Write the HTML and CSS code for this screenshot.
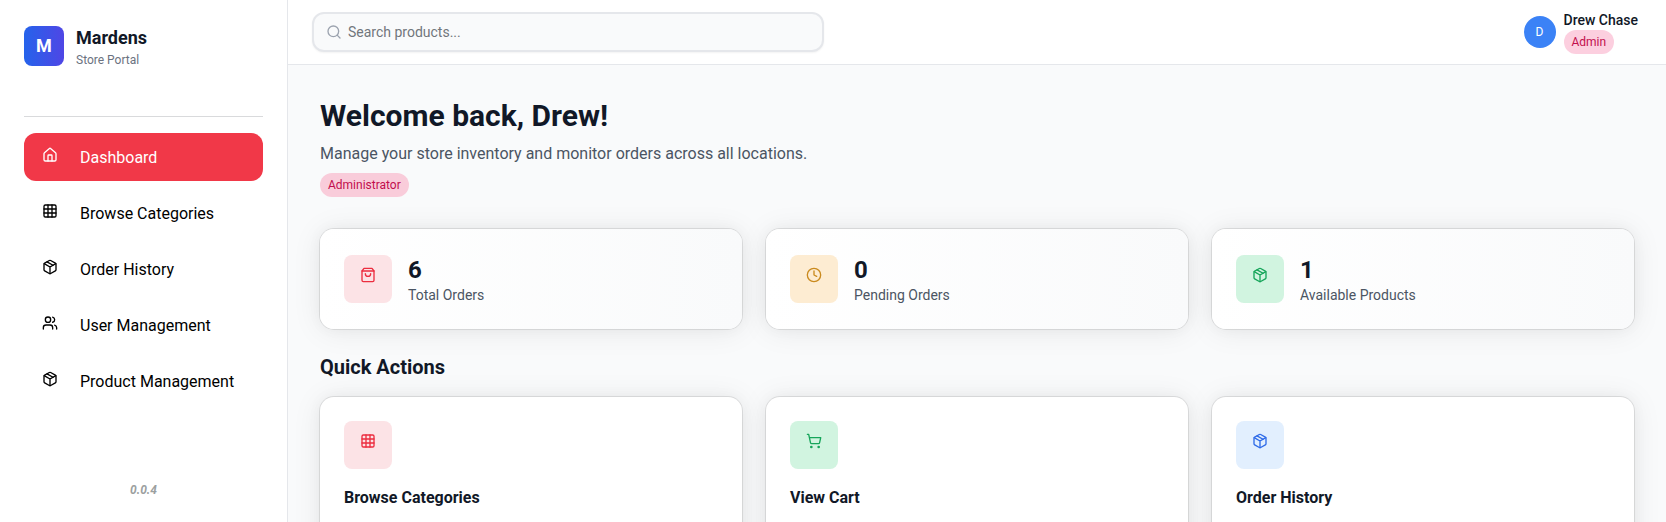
FILE: index.html
```html
<!DOCTYPE html>
<html lang="en">
<head>
<meta charset="utf-8">
<title>Mardens Store Portal</title>
<link rel="stylesheet" href="styles.css">
</head>
<body>
<svg class="sprite" aria-hidden="true">
  <symbol id="house" viewBox="0 0 24 24"><path d="M15 21v-8a1 1 0 0 0-1-1h-4a1 1 0 0 0-1 1v8"/><path d="M3 10a2 2 0 0 1 .709-1.528l7-5.999a2 2 0 0 1 2.582 0l7 5.999A2 2 0 0 1 21 10v9a2 2 0 0 1-2 2H5a2 2 0 0 1-2-2z"/></symbol>
  <symbol id="grid" viewBox="0 0 24 24"><rect width="18" height="18" x="3" y="3" rx="2"/><path d="M3 9h18M3 15h18M9 3v18M15 3v18"/></symbol>
  <symbol id="package" viewBox="0 0 24 24"><path d="m7.5 4.27 9 5.15"/><path d="M21 8a2 2 0 0 0-1-1.73l-7-4a2 2 0 0 0-2 0l-7 4A2 2 0 0 0 3 8v8a2 2 0 0 0 1 1.73l7 4a2 2 0 0 0 2 0l7-4A2 2 0 0 0 21 16Z"/><path d="m3.3 7 8.7 5 8.7-5M12 22V12"/></symbol>
  <symbol id="users" viewBox="0 0 24 24"><path d="M16 21v-2a4 4 0 0 0-4-4H6a4 4 0 0 0-4 4v2"/><circle cx="9" cy="7" r="4"/><path d="M22 21v-2a4 4 0 0 0-3-3.87M16 3.13a4 4 0 0 1 0 7.75"/></symbol>
  <symbol id="bag" viewBox="0 0 24 24"><path d="M6 2 3 6v14a2 2 0 0 0 2 2h14a2 2 0 0 0 2-2V6l-3-4Z"/><path d="M3 6h18M16 10a4 4 0 0 1-8 0"/></symbol>
  <symbol id="clock" viewBox="0 0 24 24"><circle cx="12" cy="12" r="10"/><path d="M12 6v6l4 2"/></symbol>
  <symbol id="cart" viewBox="0 0 24 24"><circle cx="8" cy="21" r="1"/><circle cx="19" cy="21" r="1"/><path d="M2.05 2.05h2l2.66 12.42a2 2 0 0 0 2 1.58h9.78a2 2 0 0 0 1.95-1.57l1.65-7.43H5.12"/></symbol>
  <symbol id="search" viewBox="0 0 24 24"><circle cx="11" cy="11" r="8"/><path d="m21 21-4.3-4.3"/></symbol>
</svg>
<div class="app">
  <aside class="sidebar">
    <div class="brand">
      <div class="logo">M</div>
      <div>
        <div class="brand-name">Mardens</div>
        <div class="brand-sub">Store Portal</div>
      </div>
    </div>
    <nav class="nav">
      <a class="nav-item active"><svg class="icon"><use href="#house"/></svg><span>Dashboard</span></a>
      <a class="nav-item"><svg class="icon"><use href="#grid"/></svg><span>Browse Categories</span></a>
      <a class="nav-item"><svg class="icon"><use href="#package"/></svg><span>Order History</span></a>
      <a class="nav-item"><svg class="icon"><use href="#users"/></svg><span>User Management</span></a>
      <a class="nav-item"><svg class="icon"><use href="#package"/></svg><span>Product Management</span></a>
    </nav>
    <div class="version">0.0.4</div>
  </aside>
  <div class="content">
    <header class="topbar">
      <label class="search"><svg class="icon"><use href="#search"/></svg><input type="text" placeholder="Search products..."></label>
      <div class="user">
        <div class="avatar">D</div>
        <div class="user-info">
          <div class="user-name">Drew Chase</div>
          <span class="chip">Admin</span>
        </div>
      </div>
    </header>
    <main class="main">
      <h1>Welcome back, Drew!</h1>
      <p class="lead">Manage your store inventory and monitor orders across all locations.</p>
      <span class="chip">Administrator</span>
      <section class="cards stats">
        <div class="card stat">
          <div class="tile red"><svg class="icon"><use href="#bag"/></svg></div>
          <div><div class="value">6</div><div class="label">Total Orders</div></div>
        </div>
        <div class="card stat">
          <div class="tile amber"><svg class="icon"><use href="#clock"/></svg></div>
          <div><div class="value">0</div><div class="label">Pending Orders</div></div>
        </div>
        <div class="card stat">
          <div class="tile green"><svg class="icon"><use href="#package"/></svg></div>
          <div><div class="value">1</div><div class="label">Available Products</div></div>
        </div>
      </section>
      <h2>Quick Actions</h2>
      <section class="cards">
        <div class="card action">
          <div class="tile red"><svg class="icon"><use href="#grid"/></svg></div>
          <h3>Browse Categories</h3>
          <p>Explore product categories and find what you need</p>
        </div>
        <div class="card action">
          <div class="tile green"><svg class="icon"><use href="#cart"/></svg></div>
          <h3>View Cart</h3>
          <p>0 items in your cart</p>
        </div>
        <div class="card action">
          <div class="tile blue"><svg class="icon"><use href="#package"/></svg></div>
          <h3>Order History</h3>
          <p>View your previous orders and reorder items</p>
        </div>
      </section>
    </main>
  </div>
</div>
</body>
</html>
```
FILE: styles.css
```css
* { box-sizing: border-box; }
body { margin: 0; font-family: Roboto, sans-serif; font-size: 16px; line-height: 24px; color: #111827; background: #f9fafb; }
h1, h2, h3, p { margin: 0; }
.sprite { display: none; }
.icon { display: block; width: 16px; height: 16px; fill: none; stroke: currentColor; stroke-width: 2; stroke-linecap: round; stroke-linejoin: round; flex: none; }
.app { display: flex; height: 522px; overflow: hidden; }

.sidebar { width: 288px; flex: none; display: flex; flex-direction: column; background: #fff; border-right: 1px solid #e5e7eb; padding: 0 24px; }
.brand { display: flex; align-items: center; gap: 12px; height: 117px; padding-bottom: 25px; border-bottom: 1px solid #d9dadc; }
.logo { width: 40px; height: 40px; border-radius: 8px; background: linear-gradient(90deg, #2563eb, #4f46e5); color: #fff; font-weight: 700; font-size: 18px; display: flex; align-items: center; justify-content: center; }
.brand-name { font-size: 18px; font-weight: 700; line-height: 28px; }
.brand-sub { font-size: 12px; line-height: 16px; color: #6b7280; }
.nav { display: flex; flex-direction: column; gap: 8px; padding-top: 16px; }
.nav-item { display: flex; gap: 22px; height: 48px; border-radius: 12px; padding: 13px 18px 11px; color: #000; }
.nav-item .icon { margin-top: 1px; }
.nav-item.active { background: #f13848; color: #fff; }
.version { margin-top: auto; padding-bottom: 24px; line-height: 16px; text-align: center; font-size: 12px; font-weight: 700; font-style: italic; color: #9ca0a0; }

.content { flex: 1; min-width: 0; }
.topbar { height: 65px; background: #fff; border-bottom: 1px solid #e5e7eb; display: flex; align-items: center; justify-content: space-between; padding: 0 28px 0 24px; }
.search { display: flex; align-items: center; gap: 6px; width: 512px; height: 40px; padding: 0 12px; border: 2px solid #e5e7eb; border-radius: 12px; background: #f9fafb; box-shadow: 0 1px 2px rgba(0,0,0,.05); }
.search .icon { color: #9ca3af; }
.search input { flex: 1; border: 0; outline: 0; padding: 0; background: none; font: 14px/20px Roboto, sans-serif; }
.search input::placeholder { color: #71767c; }
.user { display: flex; align-items: center; gap: 8px; }
.avatar { width: 32px; height: 32px; border-radius: 50%; background: #3b82f6; color: #fff; font-size: 12px; display: flex; align-items: center; justify-content: center; }
.user-name { font-size: 14px; line-height: 20px; font-weight: 500; }
.chip { display: flex; align-items: center; width: fit-content; height: 24px; padding: 0 8px; border-radius: 12px; background: #fccfdf; color: #c20e4d; font-size: 12px; }

.main { padding: 33px 32px 32px; }
.main > .chip { background: #f9ccda; }
h1 { font-size: 30px; line-height: 36px; font-weight: 700; }
.lead { margin: 8px 0 7px; color: #4b5563; }
.cards { display: grid; grid-template-columns: repeat(3, 1fr); gap: 24px; }
.stats { margin: 32px 0 24px; }
.card { border-radius: 14px; background: #fff; padding: 24px; box-shadow: 0 0 15px rgba(0,0,0,.04), 0 2px 30px rgba(0,0,0,.08), 0 0 0 1px rgba(0,0,0,.09); }
.stat { display: flex; align-items: center; gap: 16px; height: 100px; background: linear-gradient(90deg, #fff, #f9fafb); }
.tile { width: 48px; height: 48px; border-radius: 8px; padding: 12px 16px; flex: none; }
.red { background: #fce3e6; color: #ec2d3f; }
.amber { background: #fdecd2; color: #ca8a1e; }
.green { background: #d1f4e0; color: #16a55a; }
.blue { background: #e2effe; color: #2f6be8; }
.value { font-size: 24px; line-height: 32px; font-weight: 700; padding-top: 1px; margin-bottom: -1px; }
.label { font-size: 14px; line-height: 20px; color: #4b5563; }
h2 { font-size: 20px; line-height: 28px; font-weight: 700; margin-bottom: 16px; }
.action { height: 180px; }
.action h3 { font-size: 16px; line-height: 24px; font-weight: 700; margin: 17px 0 8px; }
.action p { font-size: 14px; line-height: 20px; color: #4b5563; }
```
